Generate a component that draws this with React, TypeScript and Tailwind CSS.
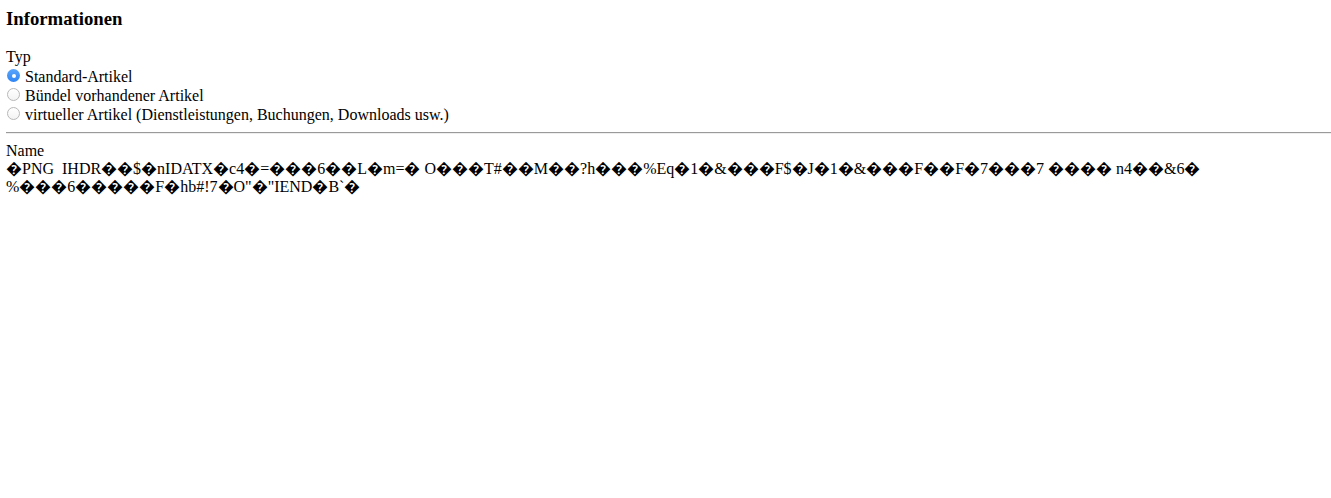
const options = [
  { id: 'standard', label: 'Standard-Artikel', checked: true },
  { id: 'bundle', label: 'Bündel vorhandener Artikel', checked: false },
  { id: 'virtual', label: 'virtueller Artikel (Dienstleistungen, Buchungen, Downloads usw.)', checked: false },
]

// raw PNG bytes shown as text, as in the original page
const line1 =
  '\uFFFDPNG\u00a0\u00a0IHDR\uFFFD\uFFFD$\uFFFDnIDATX\uFFFDc4\uFFFD=\uFFFD\uFFFD\uFFFD6\uFFFD\uFFFDL\uFFFDm=\uFFFD O\uFFFD\uFFFD\uFFFDT#\uFFFD\uFFFDM\uFFFD\uFFFD?h\uFFFD\uFFFD\uFFFD%Eq\uFFFD1\uFFFD&\uFFFD\uFFFD\uFFFDF$\uFFFDJ\uFFFD1\uFFFD&\uFFFD\uFFFD\uFFFDF\uFFFD\uFFFDF\uFFFD7\uFFFD\uFFFD\uFFFD7 \uFFFD\uFFFD\uFFFD\uFFFD n4\uFFFD\uFFFD&6\uFFFD'
const line2 =
  '%\uFFFD\uFFFD\uFFFD6\uFFFD\uFFFD\uFFFD\uFFFD\uFFFDF\uFFFDhb#!7\uFFFDO"\uFFFD"IEND\uFFFDB`\uFFFD'

function Radio({ checked }: { checked: boolean }) {
  if (checked) {
    return (
      <span className="mt-[2.6px] ml-[1px] mr-[5px] flex h-[13px] w-[13px] shrink-0 items-center justify-center rounded-full bg-gradient-to-b from-[#5aa6fa] to-[#2f84f4]">
        <span className="h-[4px] w-[4px] rounded-full bg-white" />
      </span>
    )
  }
  return (
    <span className="mt-[2.6px] ml-[1px] mr-[5px] h-[13px] w-[13px] shrink-0 rounded-full border border-[#b8b8b8] bg-gradient-to-b from-white to-[#f3f3f3]" />
  )
}

export default function App() {
  return (
    <div className="min-h-[498px] bg-white pl-[6px] pt-[8px] text-black [font-family:'Liberation_Serif','Times_New_Roman',serif] text-[16px]">
      <h3 className="mb-[18.7px] text-[18.72px] font-bold leading-[21.5px]">Informationen</h3>

      <div className="leading-[18.4px]">Typ</div>
      {options.map((o) => (
        <label key={o.id} className="flex h-[19px] items-start leading-[19px]">
          <Radio checked={o.checked} />
          <span>{o.label}</span>
        </label>
      ))}

      <hr className="mt-[8px] mb-[8px] h-[2px] border-0 border-t border-b border-t-[#9a9a9a] border-b-[#eeeeee]" />

      <div className="leading-[18.4px]">Name</div>
      <div className="whitespace-nowrap leading-[18.4px]">
        {line1}
        <br />
        {line2}
      </div>
    </div>
  )
}
